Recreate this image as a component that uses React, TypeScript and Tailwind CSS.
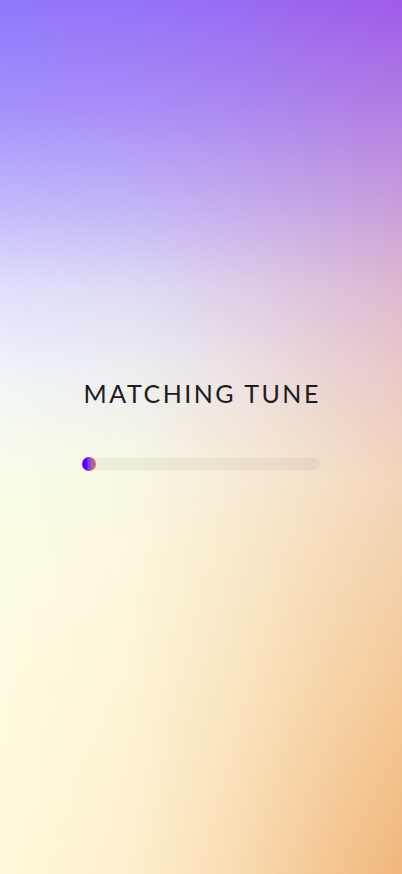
import { ReactElement } from 'react'

function ProgressBar({ value }: { value: number }): ReactElement {
  return (
    <div className="w-[238px] h-3 rounded-full bg-black/[0.045] flex items-center">
      <div
        className="h-[14px] min-w-[14px] rounded-full bg-gradient-to-r from-[#6400ff] from-35% to-[#e6643a]"
        style={{ width: `${value}%` }}
      />
    </div>
  )
}

export default function App(): ReactElement {
  return (
    <div className="relative w-full h-[874px] overflow-hidden bg-[linear-gradient(to_bottom,#9177fb_0%,#a68ffb_12%,#c4bafb_24%,#dfe0fb_33%,#eef3f8_42%,#f8fcec_52%,#fdfde4_62%,#fff8da_100%)]">
      <div className="absolute inset-0 bg-[linear-gradient(to_bottom,#a05be8_0%,#b07de3_12%,#c8a0da_24%,#dcb8d0_33%,#e8c8c8_42%,#f2d6bb_55%,#f4c998_78%,#f0b67c_100%)] [mask-image:linear-gradient(to_right,transparent_0%,rgba(0,0,0,0.12)_32%,rgba(0,0,0,0.42)_58%,rgba(0,0,0,0.8)_84%,black_100%)]" />
      <div className="relative flex flex-col items-center pt-[377px] font-['Lato','Liberation_Sans',sans-serif]">
        <h1 className="text-[25px] leading-8 font-normal tracking-[0.1em] text-[#1c1c1c] pl-[0.1em]">MATCHING TUNE</h1>
        <div className="mt-[49px]">
          <ProgressBar value={4} />
        </div>
      </div>
    </div>
  )
}
